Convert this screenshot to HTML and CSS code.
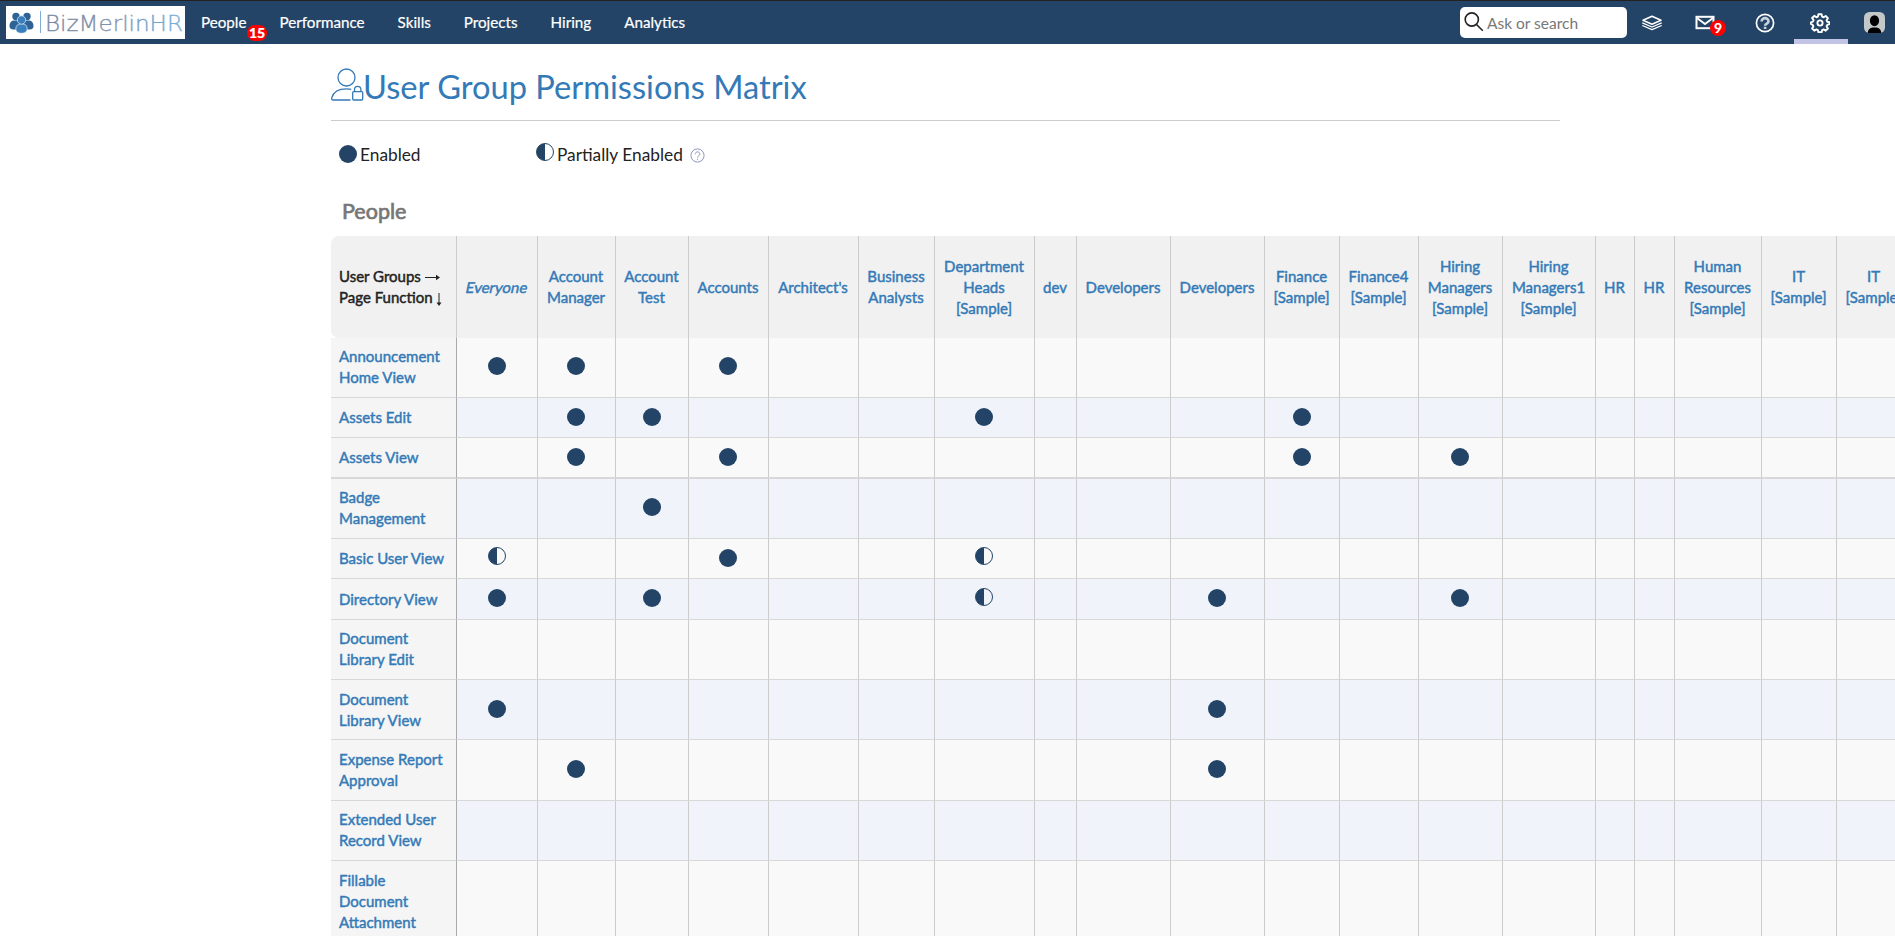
FILE: index.html
```html
<!DOCTYPE html>
<html lang="en">
<head>
<meta charset="utf-8">
<title>User Group Permissions Matrix</title>
<link rel="stylesheet" href="styles.css">
</head>
<body>
<header class="navbar">
  <a class="logo">
    <svg width="179" height="33" viewBox="0 0 179 33">
      <defs><linearGradient id="lg" x1="40" x2="176" y1="0" y2="0" gradientUnits="userSpaceOnUse"><stop offset="0" stop-color="#76869f"/><stop offset=".55" stop-color="#8395ad"/><stop offset=".8" stop-color="#6da3cf"/><stop offset="1" stop-color="#7fb0d8"/></linearGradient></defs>
      <g fill="#2d6295"><circle cx="10" cy="10.500" r="3.700"/><circle cx="21" cy="10.500" r="3.700"/><path d="M3.500 20c0-3.500 2-5.500 5-5.500h4.500v9H7.500c-3 0-4-1.500-4-3.500zM27.500 20c0-3.500-2-5.500-5-5.500H18v9h5.500c3 0 4-1.500 4-3.500z"/></g>
      <g fill="#3a7fbd" stroke="#fff" stroke-width=".6"><path d="M9.800 23c0-3.500 2-5.300 5.700-5.300s5.700 1.800 5.700 5.300c0 2.700-2 4.300-5.700 4.300S9.800 25.700 9.800 23z"/><circle cx="15.500" cy="14" r="4.200"/></g>
      <path d="M34.500 5v22" stroke="#7faed6"/>
      <text class="logo-text" x="39" y="25" textLength="138" lengthAdjust="spacingAndGlyphs" fill="url(#lg)" stroke="url(#lg)">BizMerlinHR</text>
    </svg>
  </a>
  <nav class="menu">
    <a class="people">People<span class="badge badge-people">15</span></a>
    <a class="performance">Performance</a>
    <a>Skills</a>
    <a>Projects</a>
    <a>Hiring</a>
    <a>Analytics</a>
  </nav>
  <div class="search">
    <svg width="20" height="22" viewBox="0 0 20 22" fill="none" stroke="#222" stroke-width="1.600"><circle cx="7.800" cy="8.500" r="6.600"/><path d="M12.500 13.500l6.300 6.300"/></svg>
    <span>Ask or search</span>
  </div>
  <div class="tools">
    <a class="tool layers"><svg width="22" height="16" viewBox="0 0 22 16" fill="none" stroke="#fff" stroke-linejoin="round"><path stroke-width="1.600" d="M11 1.300L20 5.300 11 9.300 2 5.300z"/><path stroke-width="1.300" d="M1.300 7.800L11 12l9.700-4.200M1.300 10.500L11 14.700l9.700-4.200"/></svg></a>
    <a class="tool mail"><svg width="20" height="15" viewBox="0 0 20 15" fill="none" stroke="#fff" stroke-width="2"><rect x="1.500" y="1.800" width="17" height="11.400"/><path d="M2 3l8 6 8-6"/></svg><span class="badge badge-mail">9</span></a>
    <a class="tool help"><svg width="20" height="20" viewBox="0 0 20 20" fill="none" stroke="#fff"><circle cx="10" cy="10" r="8.600" stroke-width="1.700"/><path stroke="#c9d3de" stroke-width="2.600" d="M6.600 8.400c0-4.400 6.900-4.400 6.900 0 0 2.300-3.400 2.100-3.400 4.400M10.100 13.700v2.300"/></svg></a>
    <a class="tool gear"><svg width="20" height="20" viewBox="0 0 20 20" fill="none" stroke="#fff"><path stroke-width="1.900" stroke-linejoin="round" d="M8.400 1.200h3.200l.5 2.400 1.500.7 2.100-1.300 2.200 2.200-1.300 2.100.7 1.500 2.200.5v1.800l-2.200.8-.7 1.500 1.300 2.100-2.200 2.200-2.100-1.300-1.500.7-.5 2.200H8.400l-.5-2.200-1.500-.7-2.100 1.300-2.200-2.200 1.300-2.100-.7-1.500L.9 11V9.300l2-.7.7-1.500-1.500-2.100 2.200-2.200 2.100 1.500 1.500-.7z"/><circle cx="10" cy="10" r="2.600" stroke-width="1.900"/></svg></a>
    <a class="tool avatar"><svg width="21" height="21" viewBox="0 0 21 21"><rect width="21" height="21" rx="5.500" fill="#c3c8c9"/><ellipse cx="10.500" cy="8.700" rx="4.600" ry="5.500"/><path d="M3.700 21c.2-3.500 2-5.200 5-5.600h3.600c3 .4 4.800 2.100 5 5.600z"/></svg></a>
  </div>
</header>

<main class="page">
  <h1 class="title">
    <svg width="33" height="34" viewBox="0 0 33 34" fill="none" stroke="#337ab7" stroke-width="1.300"><circle cx="15.500" cy="9.500" r="8.500"/><path d="M19.500 32H2.200C.8 32 .5 31 .8 29.700 2.500 23.500 8 20.800 15.500 20.800c1.800 0 3.300.1 4.700.5"/><rect x="21.700" y="23.700" width="10" height="8.300" rx="1"/><path d="M23.500 23.500v-2c0-4.300 6.400-4.300 6.400 0v2"/></svg><span>User Group Permissions Matrix</span>
  </h1>
  <div class="legend">
    <div class="legend-item"><i class="dot"></i><span>Enabled</span></div>
    <div class="legend-item partial"><i class="half"></i><span>Partially Enabled</span>
      <svg class="hint" width="15" height="15" viewBox="0 0 15 15" fill="none" stroke="#8d97bd"><circle cx="7.500" cy="7.500" r="6.600"/><path d="M5.300 6.200c0-3.100 4.500-3.100 4.500 0 0 1.700-2.200 1.500-2.200 3.300M7.600 10.700v1.200"/></svg>
    </div>
  </div>
  <h2 class="section">People</h2>
  <table class="matrix">
    <colgroup><col class="w126"><col class="w81"><col class="w78"><col class="w73"><col class="w80"><col class="w90"><col class="w76"><col class="w100"><col class="w42"><col class="w94"><col class="w94"><col class="w75"><col class="w79"><col class="w84"><col class="w93"><col class="w39"><col class="w40"><col class="w87"><col class="w75"><col class="w75"></colgroup>
    <thead>
      <tr><th class="corner">User Groups <span class="arrow-right"><svg width="15" height="7" viewBox="0 0 15 7"><path d="M0 3.500h12" stroke="#222"/><path d="M11 .8l4 2.700-4 2.700z" fill="#222"/></svg></span><br>Page Function <span class="arrow-down"><svg width="6" height="13" viewBox="0 0 6 13"><path d="M3 0v10" stroke="#222"/><path d="M.5 9.500h5L3 13z" fill="#222"/></svg></span></th><th><span class="slanted">Everyone</span></th><th>Account<br>Manager</th><th>Account<br>Test</th><th>Accounts</th><th>Architect's</th><th>Business<br>Analysts</th><th>Department<br>Heads<br>[Sample]</th><th>dev</th><th>Developers</th><th>Developers</th><th>Finance<br>[Sample]</th><th>Finance4<br>[Sample]</th><th>Hiring<br>Managers<br>[Sample]</th><th>Hiring<br>Managers1<br>[Sample]</th><th>HR</th><th>HR</th><th>Human<br>Resources<br>[Sample]</th><th>IT<br>[Sample]</th><th>IT<br>[Sample]</th></tr>
    </thead>
    <tbody>
      <tr class="h60"><th>Announcement<br>Home View</th><td><i class="dot"></i></td><td><i class="dot"></i></td><td></td><td><i class="dot"></i></td><td></td><td></td><td></td><td></td><td></td><td></td><td></td><td></td><td></td><td></td><td></td><td></td><td></td><td></td><td></td></tr>
      <tr class="h40"><th>Assets Edit</th><td></td><td><i class="dot"></i></td><td><i class="dot"></i></td><td></td><td></td><td></td><td><i class="dot"></i></td><td></td><td></td><td></td><td><i class="dot"></i></td><td></td><td></td><td></td><td></td><td></td><td></td><td></td><td></td></tr>
      <tr class="h41 thick"><th>Assets View</th><td></td><td><i class="dot"></i></td><td></td><td><i class="dot"></i></td><td></td><td></td><td></td><td></td><td></td><td></td><td><i class="dot"></i></td><td></td><td><i class="dot"></i></td><td></td><td></td><td></td><td></td><td></td><td></td></tr>
      <tr class="h60"><th>Badge<br>Management</th><td></td><td></td><td><i class="dot"></i></td><td></td><td></td><td></td><td></td><td></td><td></td><td></td><td></td><td></td><td></td><td></td><td></td><td></td><td></td><td></td><td></td></tr>
      <tr class="h40"><th>Basic User View</th><td><i class="half"></i></td><td></td><td></td><td><i class="dot"></i></td><td></td><td></td><td><i class="half"></i></td><td></td><td></td><td></td><td></td><td></td><td></td><td></td><td></td><td></td><td></td><td></td><td></td></tr>
      <tr class="h41"><th>Directory View</th><td><i class="dot"></i></td><td></td><td><i class="dot"></i></td><td></td><td></td><td></td><td><i class="half"></i></td><td></td><td></td><td><i class="dot"></i></td><td></td><td></td><td><i class="dot"></i></td><td></td><td></td><td></td><td></td><td></td><td></td></tr>
      <tr class="h60"><th>Document<br>Library Edit</th><td></td><td></td><td></td><td></td><td></td><td></td><td></td><td></td><td></td><td></td><td></td><td></td><td></td><td></td><td></td><td></td><td></td><td></td><td></td></tr>
      <tr class="h60 low"><th>Document<br>Library View</th><td><i class="dot"></i></td><td></td><td></td><td></td><td></td><td></td><td></td><td></td><td></td><td><i class="dot"></i></td><td></td><td></td><td></td><td></td><td></td><td></td><td></td><td></td><td></td></tr>
      <tr class="h61 low"><th>Expense Report<br>Approval</th><td></td><td><i class="dot"></i></td><td></td><td></td><td></td><td></td><td></td><td></td><td></td><td><i class="dot"></i></td><td></td><td></td><td></td><td></td><td></td><td></td><td></td><td></td><td></td></tr>
      <tr class="h60"><th>Extended User<br>Record View</th><td></td><td></td><td></td><td></td><td></td><td></td><td></td><td></td><td></td><td></td><td></td><td></td><td></td><td></td><td></td><td></td><td></td><td></td><td></td></tr>
      <tr class="h81"><th>Fillable<br>Document<br>Attachment</th><td></td><td></td><td></td><td></td><td></td><td></td><td></td><td></td><td></td><td></td><td></td><td></td><td></td><td></td><td></td><td></td><td></td><td></td><td></td></tr>
    </tbody>
  </table>
</main>
</body>
</html>
```
FILE: styles.css
```css
* { box-sizing: border-box; }
html, body { margin: 0; height: 936px; overflow: hidden; }
body { background: #fff; color: #222; font-family: Lato, "Liberation Sans", sans-serif; font-size: 15px; }
svg { display: block; }

/* top bar */
.navbar { display: flex; height: 44px; padding-left: 6px; background: #234466; border-top: 1px solid #222; color: #fff; }
.logo { width: 179px; height: 33px; margin-top: 5px; background: #fff; }
.logo-text { font-family: "DejaVu Sans", Lato, sans-serif; font-weight: 200; font-size: 21px; stroke-width: .3px; }
.menu { display: flex; margin-left: 16px; gap: 33px; line-height: 43px; font-size: 15.200px; }
.menu a { position: relative; -webkit-text-stroke: .2px #fff; }
.badge { position: absolute; height: 16px; border-radius: 8px; background: #f00; color: #fff; font-size: 14px; font-weight: 900; line-height: 16px; text-align: center; }
.badge-people { left: 46px; top: 24px; width: 20px; }
.search { display: flex; width: 167px; height: 31px; margin: 6px 0 0 auto; padding: 4px 0 0 4px; gap: 3px; border-radius: 5px; background: #fff; color: #777; font-size: 15.500px; line-height: 25px; }
.tools { display: flex; width: 268px; }
.tool { display: flex; position: relative; align-items: center; justify-content: center; height: 43px; }
.layers { width: 50px; }
.mail { width: 58px; padding-right: 2px; }
.badge-mail { left: 33px; top: 19px; width: 16px; }
.help { width: 59px; }
.gear { width: 54px; border-bottom: 5px solid #c3c3e6; padding: 5px 3px 0 0; }
.avatar { width: 47px; padding-left: 6px; }

/* heading */
.page { width: 1229px; margin-left: 331px; }
.title { display: flex; height: 77px; margin: 0; padding-top: 24px; border-bottom: 1px solid #ccc; color: #337ab7; font-weight: 400; font-size: 32.650px; line-height: 37px; white-space: nowrap; }
.title span { margin-left: -1px; }
.legend { display: flex; height: 67px; padding: 20px 0 0 8px; font-size: 17.300px; line-height: 28px; }
.legend-item { display: flex; width: 197px; gap: 3px; }
.legend .dot, .legend .half { margin-top: 4px; }
.legend .half { margin-top: 2px; }
.partial { width: auto; }
.hint { margin: 7px 0 0 4px; }
.section { height: 48px; margin: 0; padding: 10px 0 0 11px; color: #777; font-weight: 400; font-size: 21.500px; line-height: 26px; -webkit-text-stroke: .7px #777; }

/* status marks */
.dot, .half { display: block; width: 18px; height: 18px; border-radius: 50%; background: #234466; }
.half { border: 1px solid #234466; background: linear-gradient(90deg, #234466 50%, transparent 50%); }

/* matrix */
.matrix { width: 1581px; table-layout: fixed; border-collapse: separate; border-spacing: 0; line-height: 21px; }
.matrix th, .matrix td { padding: 0 1px 0 0; border-right: 1px solid #ccc; vertical-align: middle; }
.matrix th { color: #337ab7; font-weight: 400; -webkit-text-stroke: .45px currentColor; white-space: nowrap; }
.matrix thead th { height: 102px; background: #f1f1f1; }
.matrix thead .corner { padding-left: 8px; border-radius: 8px 0 0 8px; color: #222; text-align: left; }
.slanted { display: inline-block; transform: skewX(-12deg); }
.arrow-right, .arrow-down { display: inline-block; }
.arrow-down { vertical-align: -3px; }
.arrow-right { vertical-align: 1px; }
.matrix tbody th { padding-left: 8px; border-right-color: #aaa; background: #f5f5f5; text-align: left; }
.matrix tbody th, .matrix tbody td { border-bottom: 1px solid #d8d8d8; }
.matrix tbody td { padding-bottom: 2px; background: #f9f9f9; }
.matrix tbody tr:nth-child(even) td { background: #f0f3f9; }
.matrix .thick th, .matrix .thick td { border-bottom-width: 2px; }
.matrix .h60 td { padding-bottom: 4px; }
.matrix .h60 th { padding-bottom: 2px; }
.matrix .low td { padding-bottom: 2px; }
.matrix .low th { padding-bottom: 0; }
.matrix td .dot { margin: 0 auto; }
.matrix td .half { margin: -3px auto 0; }
.h40 { height: 40px; }
.h41 { height: 41px; }
.h60 { height: 60px; }
.h61 { height: 61px; }
.h81 { height: 81px; }
.w126 { width: 126px; }
.w100 { width: 100px; }
.w94 { width: 94px; }
.w93 { width: 93px; }
.w90 { width: 90px; }
.w87 { width: 87px; }
.w84 { width: 84px; }
.w81 { width: 81px; }
.w80 { width: 80px; }
.w79 { width: 79px; }
.w78 { width: 78px; }
.w76 { width: 76px; }
.w75 { width: 75px; }
.w73 { width: 73px; }
.w42 { width: 42px; }
.w40 { width: 40px; }
.w39 { width: 39px; }
```
